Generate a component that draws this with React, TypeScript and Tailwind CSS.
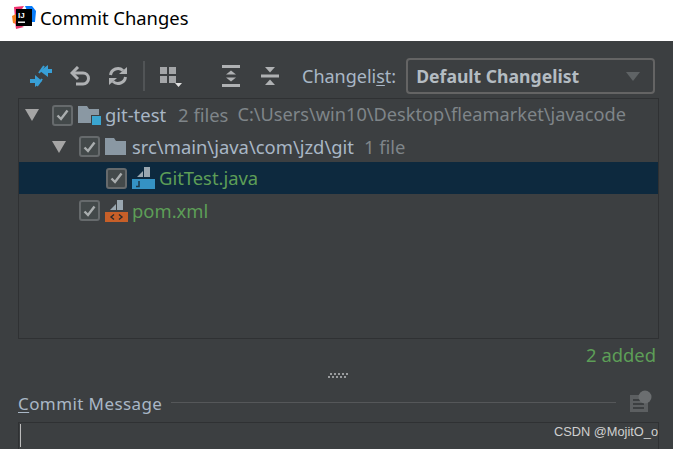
import React from "react";

const font = "font-['Noto_Sans','Liberation_Sans',sans-serif]";

function Arrow() {
  return (
    <svg width="14" height="12" viewBox="0 0 14 12" className="shrink-0">
      <polygon points="0,0 14,0 7,12" fill="#a5a5a5" />
    </svg>
  );
}

function Check() {
  return (
    <div className="flex h-[21px] w-[21px] shrink-0 items-center justify-center rounded-[3px] border-2 border-[#666a6c] bg-[#43494a]">
      <svg width="13" height="12" viewBox="0 0 13 12">
        <path d="M1.5 6.5 L5 10 L11.5 1.5" fill="none" stroke="#a9adae" strokeWidth="2.4" />
      </svg>
    </div>
  );
}

function Folder({ badge }: { badge?: boolean }) {
  return (
    <svg width="23" height="20" viewBox="0 0 23 20" className="shrink-0">
      <path d="M0 1 H9 L11 4 H21 V18 H0 Z" fill="#8a98a3" />
      {badge && <rect x="13" y="10" width="10" height="10" fill="#3c3f41" />}
      {badge && <rect x="14" y="11" width="9" height="9" fill="#3aa5d0" />}
    </svg>
  );
}

function FileIcon({ kind }: { kind: "java" | "xml" }) {
  const color = kind === "java" ? "#3592c4" : "#c75f28";
  return (
    <svg width="23" height="24" viewBox="0 0 23 24" className="shrink-0">
      <path d="M5 11 L11 5 V11 Z" fill="#9aa7b0" />
      <path d="M12 1 H18 V11 H12 Z" fill="#9aa7b0" />
      <rect x="0" y="13" width="23" height="10" fill={color} />
      {kind === "java" ? (
        <path d="M7 15 V20.5 H4" fill="none" stroke="#1d3b4c" strokeWidth="1.6" />
      ) : (
        <g fill="none" stroke="#2b2b2b" strokeWidth="1.4">
          <path d="M9 15.5 L6 18 L9 20.5" />
          <path d="M14 15.5 L17 18 L14 20.5" />
        </g>
      )}
    </svg>
  );
}

function Toolbar() {
  return (
    <div className="flex h-[57px] items-center pl-[30px] pt-[13px]">
      {/* show diff */}
      <svg width="23" height="22" viewBox="0 0 23 22" className="shrink-0">
        <g fill="#389fd6">
          <polygon points="10,6 18,0 18,4 22,4 22,8 18,8 18,12" />
          <polygon points="12,16 5,10 5,14 0,14 0,18 5,18 5,22" />
        </g>
        <path d="M14 1 L9 8" fill="none" stroke="#389fd6" strokeWidth="2" />
        <path d="M12 14 L7 21" fill="none" stroke="#389fd6" strokeWidth="2" />
      </svg>
      {/* rollback */}
      <svg width="21" height="20" viewBox="0 0 21 20" className="ml-[17px] shrink-0">
        <path d="M3 7 H13 A5.5 5.5 0 0 1 13 18 H6" fill="none" stroke="#afb1b3" strokeWidth="3" />
        <path d="M8 1 L2 7 L8 13" fill="none" stroke="#afb1b3" strokeWidth="3" />
      </svg>
      {/* refresh */}
      <svg width="20" height="20" viewBox="0 0 20 20" className="ml-[17px] shrink-0">
        <path d="M2.5 9 A7.5 7.5 0 0 1 15 4.5" fill="none" stroke="#afb1b3" strokeWidth="3" />
        <path d="M17.5 11 A7.5 7.5 0 0 1 5 15.5" fill="none" stroke="#afb1b3" strokeWidth="3" />
        <path d="M11 8 H19 V1 Z" fill="#afb1b3" />
        <path d="M9 12 H1 V19 Z" fill="#afb1b3" />
      </svg>
      <div className="ml-[15px] h-[30px] w-[2px] bg-[#515456]" />
      {/* group by */}
      <svg width="23" height="22" viewBox="0 0 23 22" className="ml-[15px] shrink-0">
        <g fill="#a4a6a8">
          <rect x="0" y="2" width="7" height="7" />
          <rect x="9" y="2" width="7" height="7" />
          <rect x="0" y="11" width="7" height="7" />
          <rect x="9" y="11" width="7" height="7" />
        </g>
        <polygon points="15,18 22,18 18.5,22" fill="#e0e0e0" />
      </svg>
      {/* expand all */}
      <svg width="20" height="24" viewBox="0 0 20 24" className="ml-[38px] shrink-0">
        <g fill="#afb1b3">
          <rect x="1" y="1" width="18" height="3" />
          <rect x="1" y="20" width="18" height="3" />
          <polygon points="10,6.5 15,10.5 5,10.5" />
          <polygon points="10,17.5 15,13.5 5,13.5" />
        </g>
      </svg>
      {/* collapse all */}
      <svg width="20" height="20" viewBox="0 0 20 20" className="ml-[19px] shrink-0">
        <g fill="#afb1b3">
          <rect x="1" y="8.5" width="18" height="3" />
          <polygon points="5,1 15,1 10,6.5" />
          <polygon points="5,19 15,19 10,13.5" />
        </g>
      </svg>
      <span className="ml-[22px] text-[18px] leading-none text-[#a9b7c6]">
        Changeli<span className="underline underline-offset-2">s</span>t:
      </span>
      <div className="ml-[10px] flex h-[36px] w-[249px] items-center rounded-[4px] border-2 border-[#646464] bg-[#3c3f41] pl-[8px] pr-[13px]">
        <span className="text-[17.6px] font-bold text-[#b4bcc2]">Default Changelist</span>
        <svg width="14" height="9" viewBox="0 0 14 9" className="ml-auto">
          <polygon points="0,0 14,0 7,9" fill="#5f6365" />
        </svg>
      </div>
    </div>
  );
}

function Tree() {
  return (
    <div className="ml-[18px] mr-[14px] flex h-[241px] flex-col border border-[#2f3133] bg-[#3c3f41] text-[18.4px]">
      <div className="flex h-[32px] items-center pl-[6px]">
        <Arrow />
        <div className="ml-[13px]"><Check /></div>
        <div className="ml-[5px]"><Folder badge /></div>
        <span className="ml-[4px] whitespace-nowrap text-[#a9b7c6]">git-test</span>
        <span className="ml-[12px] whitespace-nowrap text-[#7f8589]">2 files</span>
        <span className="ml-[9px] whitespace-nowrap text-[18.2px] text-[#7f8589]">C:\Users\win10\Desktop\fleamarket\javacode</span>
      </div>
      <div className="flex h-[31px] items-center pl-[33px]">
        <Arrow />
        <div className="ml-[13px]"><Check /></div>
        <div className="ml-[5px]"><Folder /></div>
        <span className="ml-[4px] whitespace-nowrap text-[#a9b7c6]">src\main\java\com\jzd\git</span>
        <span className="ml-[10px] whitespace-nowrap text-[#7f8589]">1 file</span>
      </div>
      <div className="flex h-[32px] items-center bg-[#0d293e] pl-[87px]">
        <Check />
        <div className="ml-[5px]"><FileIcon kind="java" /></div>
        <span className="ml-[4px] whitespace-nowrap text-[#5d9e57]">GitTest.java</span>
      </div>
      <div className="flex h-[33px] items-center pl-[60px]">
        <Check />
        <div className="ml-[5px]"><FileIcon kind="xml" /></div>
        <span className="ml-[4px] whitespace-nowrap text-[#5d9e57]">pom.xml</span>
      </div>
    </div>
  );
}

export default function App() {
  return (
    <div className={`relative flex h-[449px] w-[673px] flex-col overflow-hidden bg-[#3c3f41] ${font}`}>
      <div className="flex h-[41px] shrink-0 items-center bg-white pb-[5px] pl-[12px]">
        {/* IntelliJ logo */}
        <svg width="24" height="24" viewBox="0 0 24 24" className="shrink-0">
          <polygon points="2,1 12,0 8,6 3,12" fill="#f0326e" />
          <polygon points="0,10 4,8 4,18 1,17" fill="#f58220" />
          <polygon points="3,15 8,19 12,21 4,23" fill="#e8386f" />
          <polygon points="13,0 20,0 24,5 23,16 20,16" fill="#087cfa" />
          <rect x="4" y="3" width="16" height="17" fill="#000" />
          <text x="6" y="11.5" fontSize="8" fontWeight="700" fill="#fff" fontFamily="Liberation Sans">IJ</text>
          <rect x="6" y="15.5" width="7" height="1.4" fill="#fff" />
        </svg>
        <span className="ml-[4px] text-[18.4px] text-black">Commit Changes</span>
      </div>
      <Toolbar />
      <Tree />
      <div className="flex h-[34px] items-center justify-end pb-[2px] pr-[17px]">
        <span className="text-[18.4px] text-[#5d9e57]">2 added</span>
      </div>
      <div className="flex justify-center pl-[3px]">
        <svg width="22" height="6" viewBox="0 0 22 6">
          <g fill="#9a9c9e">
            <rect x="1" y="3" width="2" height="2" /><rect x="5" y="3" width="2" height="2" />
            <rect x="9" y="3" width="2" height="2" /><rect x="13" y="3" width="2" height="2" />
            <rect x="17" y="3" width="2" height="2" />
            <rect x="3" y="0" width="2" height="2" /><rect x="7" y="0" width="2" height="2" />
            <rect x="11" y="0" width="2" height="2" /><rect x="15" y="0" width="2" height="2" />
            <rect x="19" y="0" width="2" height="2" />
          </g>
        </svg>
      </div>
      <div className="mt-[11px] flex h-[28px] items-center pl-[18px] pr-[20px]">
        <span className="whitespace-nowrap text-[17px] tracking-[0.4px] text-[#a9b7c6]">
          <span className="underline underline-offset-2">C</span>ommit Message
        </span>
        <div className="mb-[4px] ml-[9px] h-px flex-1 bg-[#555759]" />
        <svg width="24" height="24" viewBox="0 0 24 24" className="mb-[6px] ml-[13px] shrink-0">
          <rect x="1" y="6" width="18" height="17" fill="#5c5f61" />
          <g fill="#3c3f41">
            <rect x="4" y="10" width="11" height="2" /><rect x="4" y="14" width="11" height="2" />
            <rect x="4" y="18" width="11" height="2" />
          </g>
          <circle cx="16" cy="8" r="6.5" fill="#6b6e70" />
        </svg>
      </div>
      <div className="ml-[18px] mr-[14px] mt-[4px] flex-1 border-x border-t border-[#2f3133] pl-[1px] pt-[1px]">
        <div className="h-[23px] w-px bg-[#bbbbbb]" />
      </div>
      <span className="absolute right-[15px] top-[422px] font-['Liberation_Sans',sans-serif] text-[12.8px] text-[#cfcfcf]">
        CSDN @MojitO_o
      </span>
    </div>
  );
}
